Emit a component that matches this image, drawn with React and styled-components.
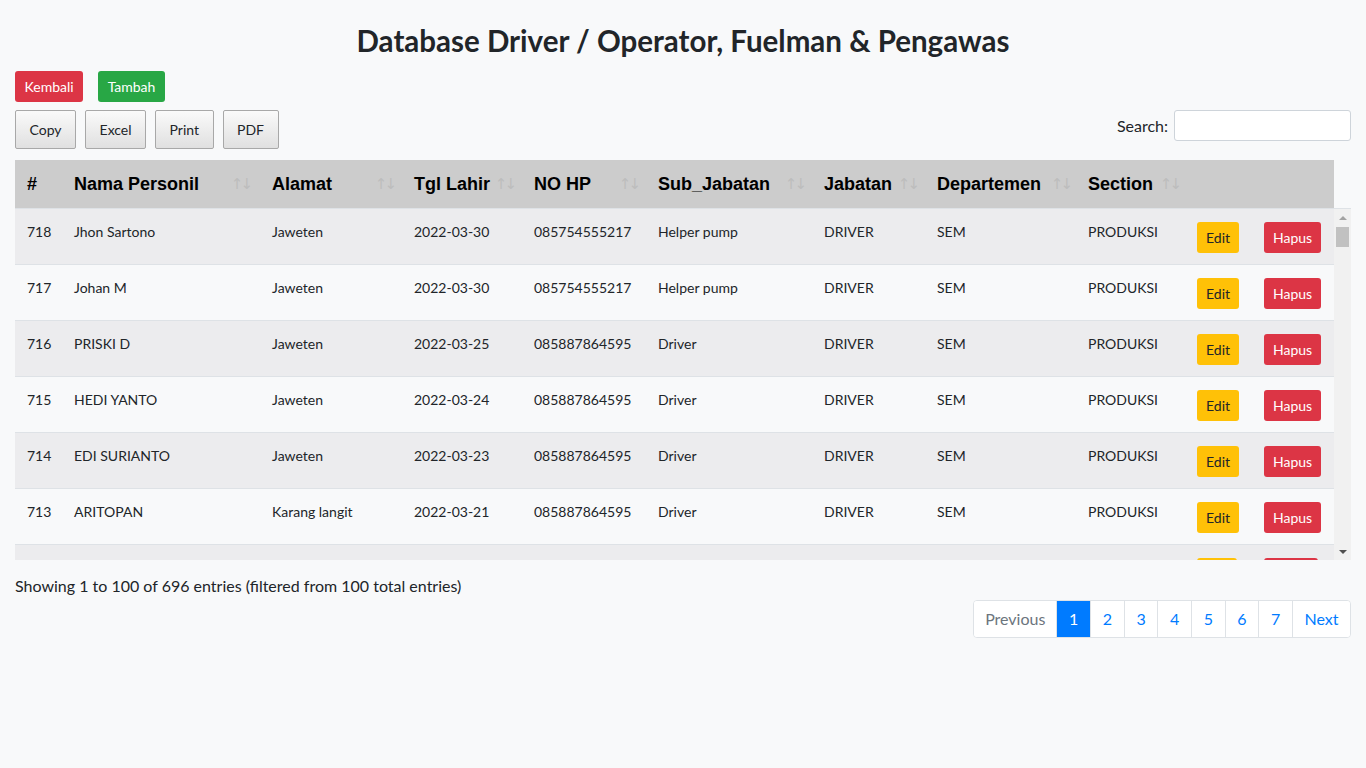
import React from "react";
import styled, { createGlobalStyle } from "styled-components";

const Global = createGlobalStyle`
  html, body { margin: 0; padding: 0; }
  body {
    background: #f8f9fa;
    font-family: "Lato", "Noto Sans", sans-serif;
    color: #212529;
    font-size: 16px;
  }
  * { box-sizing: border-box; }
`;

const Page = styled.div`
  padding: 19px 15px 0 15px;
`;

const Title = styled.h2`
  margin: 0 0 8px 0;
  text-align: center;
  font-size: 29.5px;
  font-weight: 700;
  line-height: 44px;
  color: #212529;
`;

const ActionBar = styled.div`
  display: flex;
  gap: 15px;
  margin-bottom: 8px;
`;

const SmallBtn = styled.button`
  font-family: inherit;
  font-size: 14px;
  height: 31px;
  padding: 0 9.5px;
  border: none;
  border-radius: 3px;
  color: #fff;
  background: ${(p) => (p.$variant === "green" ? "#28a745" : "#dc3545")};
`;

const ToolRow = styled.div`
  display: flex;
  justify-content: space-between;
  align-items: flex-start;
  margin-bottom: 11px;
`;

const DtButtons = styled.div`
  display: flex;
  gap: 9px;
`;

const DtBtn = styled.button`
  font-family: inherit;
  font-size: 14px;
  height: 39px;
  padding: 0 13.5px;
  border: 1px solid #a8a8a8;
  border-radius: 2px;
  color: #212529;
  background: linear-gradient(to bottom, #fafafa 0%, #e0e0e0 100%);
`;

const SearchLabel = styled.label`
  display: flex;
  align-items: center;
  gap: 6px;
  font-size: 16px;
  color: #212529;
`;

const SearchInput = styled.input`
  width: 177px;
  height: 31px;
  border: 1px solid #ced4da;
  border-radius: 3px;
  background: #fff;
`;

const TableWrap = styled.div`
  width: 1336px;
`;

const HeadTable = styled.table`
  width: 1319px;
  border-collapse: collapse;
  table-layout: fixed;
  background: #cccccc;
`;

const Th = styled.th`
  height: 48px;
  padding: 0 12px;
  text-align: left;
  font-family: "Liberation Sans", Arial, sans-serif;
  font-weight: 700;
  font-size: 18px;
  color: #000;
  position: relative;
  white-space: nowrap;
`;

const SortIcon = styled.span`
  position: absolute;
  right: ${(p) => p.$r || 10}px;
  top: 50%;
  transform: translateY(-50%);
  font-family: "DejaVu Sans", sans-serif;
  font-weight: 400;
  font-size: 15px;
  color: #bdbdbd;
  letter-spacing: -3px;
`;

const ScrollArea = styled.div`
  display: flex;
  height: 352px;
  border-top: 1px solid #dee2e6;
`;

const BodyClip = styled.div`
  width: 1319px;
  overflow: hidden;
`;

const Scrollbar = styled.div`
  width: 17px;
  background: #f1f1f1;
  display: flex;
  flex-direction: column;
  align-items: center;
`;

const ArrowBox = styled.div`
  height: 17px;
  width: 17px;
  display: flex;
  align-items: center;
  justify-content: center;
`;

const Arrow = styled.div`
  width: 0;
  height: 0;
  border-left: 4px solid transparent;
  border-right: 4px solid transparent;
  ${(p) =>
    p.$down
      ? "border-top: 4px solid #505050;"
      : "border-bottom: 4px solid #a3a3a3;"}
`;

const Track = styled.div`
  flex: 1;
  width: 100%;
  padding: 1px 2px 0 2px;
`;

const Thumb = styled.div`
  height: 20px;
  width: 100%;
  background: #c1c1c1;
`;

const BodyTable = styled.table`
  width: 1319px;
  border-collapse: separate;
  border-spacing: 0;
  table-layout: fixed;
`;

const Tr = styled.tr`
  background: ${(p) => (p.$odd ? "#ececee" : "#f8f9fa")};
`;

const Td = styled.td`
  height: 56px;
  padding: 14px 12px 0 12px;
  vertical-align: top;
  font-size: 14px;
  color: #212529;
  white-space: nowrap;
  overflow: hidden;
  border-bottom: 1px solid #dee2e6;
`;

const BtnTd = styled(Td)`
  padding-top: 13px;
`;

const RowBtn = styled.button`
  font-family: inherit;
  font-size: 14px;
  height: 31px;
  padding: 0 9px;
  border: none;
  border-radius: 3px;
  background: ${(p) => (p.$variant === "edit" ? "#ffc107" : "#dc3545")};
  color: ${(p) => (p.$variant === "edit" ? "#212529" : "#fff")};
`;

const Footer = styled.div`
  margin-top: 16px;
`;

const Info = styled.div`
  font-size: 16px;
  line-height: 20px;
`;

const PagerRow = styled.div`
  display: flex;
  justify-content: flex-end;
  margin-top: 4px;
`;

const Pager = styled.ul`
  display: flex;
  list-style: none;
  margin: 0;
  padding: 0;
  border: 1px solid #dee2e6;
  border-radius: 4px;
  background: #fff;
  overflow: hidden;
`;

const PageItem = styled.li`
  height: 36px;
  line-height: 36px;
  padding: 0 ${(p) => p.$px || 11.7}px;
  font-size: 16px;
  color: ${(p) => (p.$active ? "#fff" : p.$disabled ? "#6c757d" : "#007bff")};
  background: ${(p) => (p.$active ? "#007bff" : "#fff")};
  border-left: ${(p) => (p.$first ? "none" : "1px solid #dee2e6")};
`;

const cols = [47, 198, 142, 120, 124, 166, 113, 151, 109, 67, 82];

const rows = [
  ["718", "Jhon Sartono", "Jaweten", "2022-03-30", "085754555217", "Helper pump"],
  ["717", "Johan M", "Jaweten", "2022-03-30", "085754555217", "Helper pump"],
  ["716", "PRISKI D", "Jaweten", "2022-03-25", "085887864595", "Driver"],
  ["715", "HEDI YANTO", "Jaweten", "2022-03-24", "085887864595", "Driver"],
  ["714", "EDI SURIANTO", "Jaweten", "2022-03-23", "085887864595", "Driver"],
  ["713", "ARITOPAN", "Karang langit", "2022-03-21", "085887864595", "Driver"],
];

const headers = [
  ["#", null],
  ["Nama Personil", 10],
  ["Alamat", 8],
  ["Tgl Lahir", 8],
  ["NO HP", 8],
  ["Sub_Jabatan", 8],
  ["Jabatan", 8],
  ["Departemen", 6],
  ["Section", 6],
  ["", null],
  ["", null],
];

const Cols = () => (
  <colgroup>
    {cols.map((w, i) => (
      <col key={i} style={{ width: w }} />
    ))}
  </colgroup>
);

export default function App() {
  return (
    <>
      <Global />
      <Page>
        <Title>Database Driver / Operator, Fuelman &amp; Pengawas</Title>
        <ActionBar>
          <SmallBtn>Kembali</SmallBtn>
          <SmallBtn $variant="green">Tambah</SmallBtn>
        </ActionBar>
        <ToolRow>
          <DtButtons>
            <DtBtn>Copy</DtBtn>
            <DtBtn>Excel</DtBtn>
            <DtBtn>Print</DtBtn>
            <DtBtn>PDF</DtBtn>
          </DtButtons>
          <SearchLabel>
            Search:
            <SearchInput type="search" />
          </SearchLabel>
        </ToolRow>
        <TableWrap>
          <HeadTable>
            <Cols />
            <thead>
              <tr>
                {headers.map(([h, r], i) => (
                  <Th key={i}>
                    {h}
                    {r !== null && <SortIcon $r={r}>↑↓</SortIcon>}
                  </Th>
                ))}
              </tr>
            </thead>
          </HeadTable>
          <ScrollArea>
            <BodyClip>
              <BodyTable>
                <Cols />
                <tbody>
                  {rows.map((r, i) => (
                    <Tr key={r[0]} $odd={i % 2 === 0}>
                      {r.map((c, j) => (
                        <Td key={j}>{c}</Td>
                      ))}
                      <Td>DRIVER</Td>
                      <Td>SEM</Td>
                      <Td>PRODUKSI</Td>
                      <BtnTd>
                        <RowBtn $variant="edit">Edit</RowBtn>
                      </BtnTd>
                      <BtnTd>
                        <RowBtn>Hapus</RowBtn>
                      </BtnTd>
                    </Tr>
                  ))}
                  <Tr $odd>
                    {cols.slice(0, 9).map((_, j) => (
                      <Td key={j} />
                    ))}
                    <BtnTd>
                      <RowBtn $variant="edit" aria-hidden="true">&nbsp;&nbsp;&nbsp;&nbsp;&nbsp;&nbsp;</RowBtn>
                    </BtnTd>
                    <BtnTd>
                      <RowBtn aria-hidden="true">&nbsp;&nbsp;&nbsp;&nbsp;&nbsp;&nbsp;&nbsp;&nbsp;&nbsp;&nbsp;</RowBtn>
                    </BtnTd>
                  </Tr>
                </tbody>
              </BodyTable>
            </BodyClip>
            <Scrollbar>
              <ArrowBox>
                <Arrow />
              </ArrowBox>
              <Track>
                <Thumb />
              </Track>
              <ArrowBox>
                <Arrow $down />
              </ArrowBox>
            </Scrollbar>
          </ScrollArea>
        </TableWrap>
        <Footer>
          <Info>Showing 1 to 100 of 696 entries (filtered from 100 total entries)</Info>
          <PagerRow>
            <Pager>
              <PageItem $first $disabled $px={11}>Previous</PageItem>
              <PageItem $active>1</PageItem>
              {["2", "3", "4", "5", "6", "7"].map((n) => (
                <PageItem key={n}>{n}</PageItem>
              ))}
              <PageItem $px={11.5}>Next</PageItem>
            </Pager>
          </PagerRow>
        </Footer>
      </Page>
    </>
  );
}
